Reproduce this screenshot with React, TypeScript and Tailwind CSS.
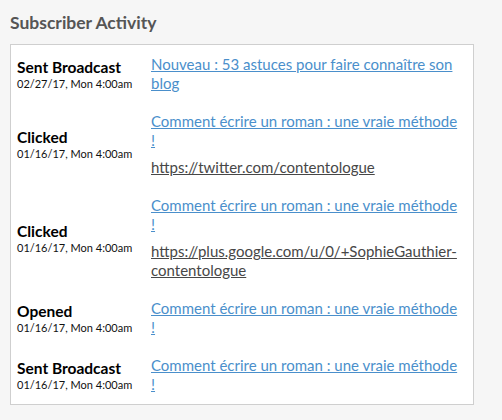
import React from "react";

type Item = { label: string; date: string; links: { text: string[]; kind: "blue" | "gray" }[] };

const items: Item[] = [
  {
    label: "Sent Broadcast",
    date: "02/27/17, Mon 4:00am",
    links: [{ text: ["Nouveau : 53 astuces pour faire connaître son", "blog"], kind: "blue" }],
  },
  {
    label: "Clicked",
    date: "01/16/17, Mon 4:00am",
    links: [
      { text: ["Comment écrire un roman : une vraie méthode", "!"], kind: "blue" },
      { text: ["https://twitter.com/contentologue"], kind: "gray" },
    ],
  },
  {
    label: "Clicked",
    date: "01/16/17, Mon 4:00am",
    links: [
      { text: ["Comment écrire un roman : une vraie méthode", "!"], kind: "blue" },
      { text: ["https://plus.google.com/u/0/+SophieGauthier-", "contentologue"], kind: "gray" },
    ],
  },
  {
    label: "Opened",
    date: "01/16/17, Mon 4:00am",
    links: [{ text: ["Comment écrire un roman : une vraie méthode", "!"], kind: "blue" }],
  },
  {
    label: "Sent Broadcast",
    date: "01/16/17, Mon 4:00am",
    links: [{ text: ["Comment écrire un roman : une vraie méthode", "!"], kind: "blue" }],
  },
];

export default function App() {
  return (
    <div
      className="w-[502px] h-[420px] bg-[#f6f6f6] pl-[10px] pr-[28px] overflow-hidden"
      style={{ fontFamily: '"Lato", "Open Sans", sans-serif' }}
    >
      <h2 className="pt-[12px] h-[44px] text-[17.5px] leading-[22px] font-bold text-[#555555]">
        Subscriber Activity
      </h2>
      <div className="bg-white border border-[#cfcfcf] pl-[6px] pr-[8px] py-[10px]">
        {items.map((it, i) => (
          <div key={i} className={`grid grid-cols-[134px_1fr] items-center ${i > 0 ? "mt-[19px]" : ""}`}>
            <div className="text-black">
              <div className="text-[15.5px] leading-[18px] font-bold">{it.label}</div>
              <div className="text-[11px] leading-[15px] text-[#111111]">{it.date}</div>
            </div>
            <div className="flex flex-col gap-[8px]">
              {it.links.map((l, j) => (
                <a
                  key={j}
                  href="#"
                  className={`block text-[15px] leading-[19px] underline ${
                    l.kind === "blue" ? "text-[#4a8fcb]" : "text-[#474747]"
                  }`}
                >
                  {l.text.map((t, k) => (
                    <span key={k} className="block">
                      {t}
                    </span>
                  ))}
                </a>
              ))}
            </div>
          </div>
        ))}
      </div>
    </div>
  );
}
